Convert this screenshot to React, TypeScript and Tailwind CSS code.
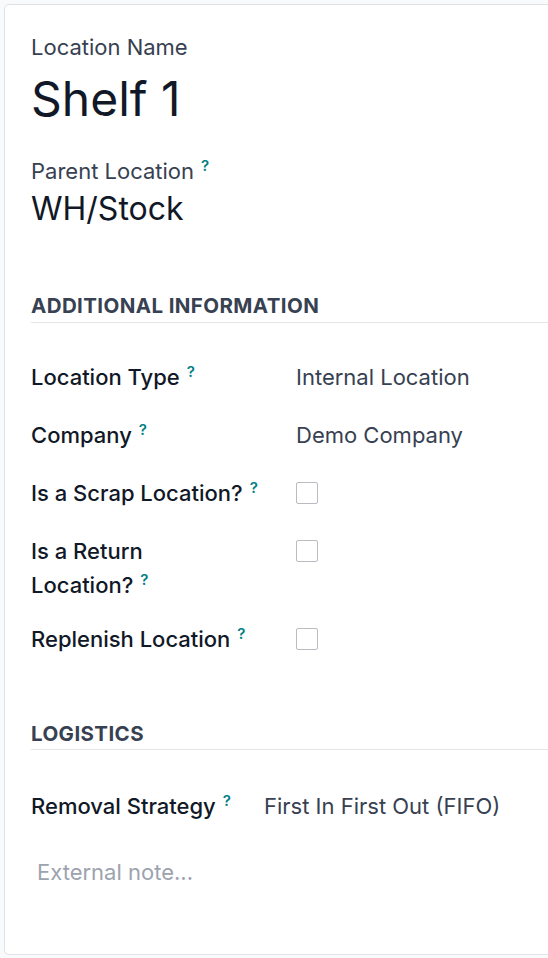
import React from 'react';

const Help: React.FC = () => (
  <sup className="ml-[7px] text-[15px] font-semibold text-[#017e84] relative -top-[8px]">?</sup>
);

const Row: React.FC<{ label: React.ReactNode; children?: React.ReactNode; labelWidth?: string; gap?: string }> = ({
  label,
  children,
  labelWidth = 'w-[265px]',
  gap = 'mb-6',
}) => (
  <div className={`flex items-start ${gap}`}>
    <div className={`${labelWidth} shrink-0 text-[22px] leading-[34px] font-medium text-[#111827]`}>{label}</div>
    <div className="flex-1 text-[22px] leading-[34px] text-[#374151]">{children}</div>
  </div>
);

const Checkbox: React.FC = () => (
  <input type="checkbox" className="appearance-none mt-[6px] w-[22px] h-[22px] border border-[#b9bcc0] rounded-[2px] bg-white block" />
);

const App: React.FC = () => {
  return (
    <div className="w-[548px] h-[958px] overflow-hidden bg-[#f9fafb] pt-[4px] pl-[4px] font-['Inter',sans-serif]">
      <div className="w-[570px] h-[951px] bg-white border border-[#e0e2e5] rounded-[5px] pl-[26px] pt-[28px]">
        <div className="text-[22px] leading-[28px] text-[#374151]">Location Name</div>
        <div className="text-[48px] leading-[64px] text-[#111827] mt-[6px]">Shelf 1</div>

        <div className="mt-[26px] text-[22px] leading-[28px] text-[#374151]">
          Parent Location
          <Help />
        </div>
        <div className="text-[32px] leading-[48px] text-[#111827]">WH/Stock</div>

        <div className="mt-[59px] border-b border-[#e5e7eb] pb-[2px]">
          <div className="text-[20.5px] leading-[28px] font-bold tracking-[0.4px] text-[#374151]">ADDITIONAL INFORMATION</div>
        </div>

        <div className="mt-[37px]">
          <Row label={<>Location Type<Help /></>}>Internal Location</Row>
          <Row label={<>Company<Help /></>}>Demo Company</Row>
          <Row label={<>Is a Scrap Location?<Help /></>}>
            <Checkbox />
          </Row>
          <Row gap="mb-[20px]" label={<>Is a Return<br />Location?<Help /></>}>
            <Checkbox />
          </Row>
          <Row label={<>Replenish Location<Help /></>}>
            <Checkbox />
          </Row>
        </div>

        <div className="mt-[64px] border-b border-[#e5e7eb] pb-[1px]">
          <div className="text-[20.5px] leading-[28px] font-bold tracking-[0.4px] text-[#374151]">LOGISTICS</div>
        </div>

        <div className="mt-[39px]">
          <Row labelWidth="w-[233px]" label={<>Removal Strategy<Help /></>}>First In First Out (FIFO)</Row>
        </div>

        <div className="mt-[32px] pl-[6px] text-[22px] leading-[34px] text-[#9ca3af]">External note...</div>
      </div>
    </div>
  );
};

export default App;
